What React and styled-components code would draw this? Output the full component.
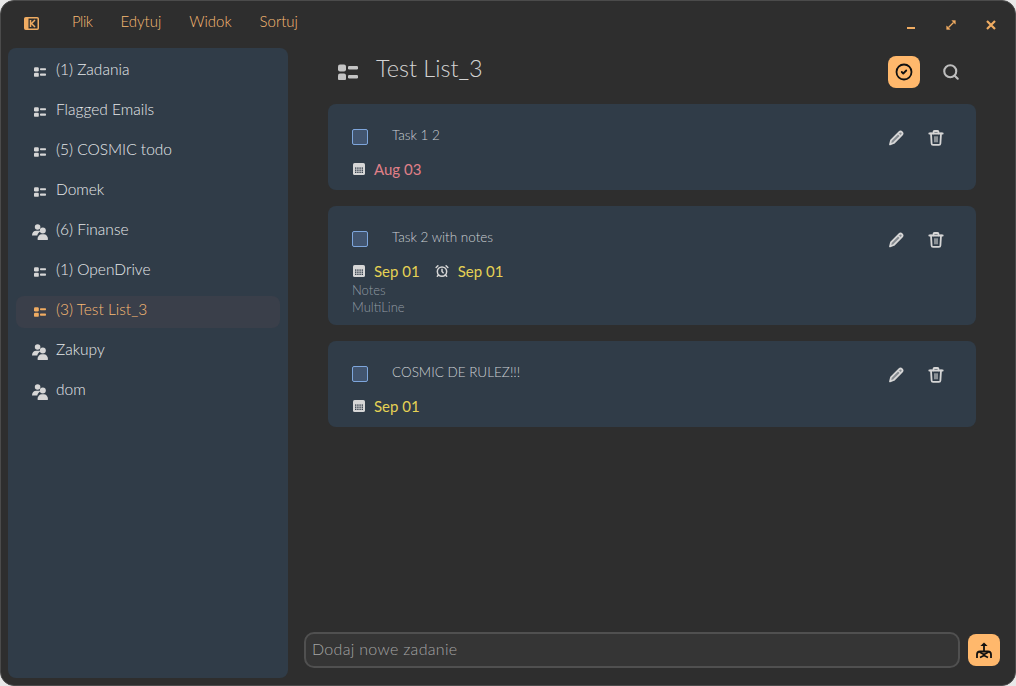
import React from 'react'
import styled, { createGlobalStyle } from 'styled-components'
import { AlarmClock, CircleCheck, Search } from 'lucide-react'

const GlobalStyle = createGlobalStyle`
    html, body {
        margin: 0;
        padding: 0;
        background: #e8e8e8;
    }
    * {
        box-sizing: border-box;
    }
`

const ListIcon = ({ size = 12, color = '#d6d6d6' }) => (
    <svg width={size} height={size * 0.84} viewBox="0 0 20 16" fill={color}>
        <rect x="0" y="0" width="8" height="7" rx="2" />
        <rect x="0" y="9" width="8" height="7" rx="2" />
        <rect x="10" y="1.500" width="10" height="3.600" rx="1.200" />
        <rect x="10" y="10.500" width="10" height="3.600" rx="1.200" />
    </svg>
)

const PeopleIcon = () => (
    <svg width="16" height="16" viewBox="0 0 16 16" fill="#d6d6d6">
        <circle cx="5.600" cy="3" r="2.800" />
        <path d="M0 11.500C0 8.600 1.800 6.800 4.200 6.800h2.400c.6 0 1.200.1 1.700.4C6.600 8.300 5.600 9.700 5.300 11.500z" />
        <circle cx="10.800" cy="6.400" r="3" />
        <path d="M6.200 16c-.4 0-.7-.3-.7-.7 0-3 1.900-5 4.300-5h2c2.400 0 4.200 2 4.200 5 0 .4-.3.7-.7.7z" />
    </svg>
)

const CalendarIcon = () => (
    <svg width="12" height="12" viewBox="0 0 12 12">
        <rect width="12" height="12" rx="1.600" fill="#d6d6d6" />
        <g fill="#39434f">
            {[2, 4.200, 6.400, 8.600].map((x) =>
                [4.400, 6.500, 8.600].map((y) => <rect key={`${x}-${y}`} x={x} y={y} width="1.400" height="1.400" />)
            )}
        </g>
    </svg>
)

const PencilIcon = () => (
    <svg width="16" height="16" viewBox="0 0 16 16" fill="none" stroke="#d6d6d6" strokeLinejoin="round">
        <path d="M11.200 2.100a1.900 1.900 0 0 1 2.700 2.700L5.800 13 2 14.400l1-4z" fill="#d6d6d6" fillOpacity="0.5" strokeWidth="1.800" />
        <path d="M10 3.400l2.600 2.600" strokeWidth="1.400" />
    </svg>
)

const TrashIcon = () => (
    <svg width="16" height="16" viewBox="0 0 16 16" fill="none" stroke="#d6d6d6" strokeWidth="1.800" strokeLinecap="round" strokeLinejoin="round">
        <path d="M1.300 3.500h13.400" />
        <path d="M5.500 3.300V2a1 1 0 0 1 1-1h3a1 1 0 0 1 1 1v1.300" />
        <path d="M3 3.500l.6 10a1.500 1.500 0 0 0 1.500 1.400h5.800a1.500 1.500 0 0 0 1.500-1.400l.6-10" />
        <rect x="6" y="6.300" width="4" height="6" fill="#d6d6d6" fillOpacity="0.55" stroke="none" />
    </svg>
)

const LogoIcon = () => (
    <svg width="15" height="13" viewBox="0 0 15 13" fill="none" stroke="#f0ac62">
        <rect x="0.750" y="0.750" width="13.500" height="11.500" rx="1" strokeWidth="1.500" />
        <rect x="1" y="1" width="3.500" height="11" fill="#f0ac62" stroke="none" />
        <path d="M6.500 3v7M11 3L7.500 6.500 11 10" strokeWidth="1.500" />
    </svg>
)

const MinimizeIcon = () => (
    <svg width="10" height="10" viewBox="0 0 10 10" stroke="#f0ac62" strokeWidth="2">
        <path d="M1 8h8" />
    </svg>
)

const MaximizeIcon = () => (
    <svg width="10" height="10" viewBox="0 0 10 10" fill="#f0ac62" stroke="#f0ac62">
        <path d="M2.500 7.500l5-5" strokeWidth="1.300" />
        <path d="M5.800 .6h3.600v3.600zM.6 5.800v3.600h3.600z" strokeWidth="0.400" />
    </svg>
)

const CloseIcon = () => (
    <svg width="10" height="10" viewBox="0 0 10 10" stroke="#f0ac62" strokeWidth="2.200">
        <path d="M1 1l8 8M9 1L1 9" />
    </svg>
)

const SendIcon = () => (
    <svg width="18" height="18" viewBox="0 0 18 18" fill="none" stroke="#111" strokeWidth="1.800">
        <path d="M9 10V3" />
        <path d="M5.400 5L9 1.400 12.600 5z" fill="#111" stroke="none" />
        <path d="M2 17v-3.500C2 11.500 3 10.500 5 10.500h8c2 0 3 1 3 3V17" />
        <path d="M4.500 11L9 13.500l4.500-2.500" />
        <path d="M5 16.500L9 14.500l4 2" />
    </svg>
)

const Window = styled.div`
    width: 1016px;
    height: 686px;
    display: flex;
    flex-direction: column;
    overflow: hidden;
    background: #2e2e2e;
    border: 1px solid #4b4b4b;
    border-radius: 14px;
    font-family: Lato, "Liberation Sans", sans-serif;
    font-weight: 300;
`

const TitleBar = styled.div`
    height: 47px;
    flex: none;
    display: flex;
    align-items: flex-start;
    padding: 10px 19px 0 23px;
`

const LogoSlot = styled.div`
    width: 48px;
    height: 24px;
    display: flex;
    align-items: center;
`

const Menu = styled.nav`
    display: flex;
    gap: 28px;
`

const MenuItem = styled.span`
    font-size: 15px;
    line-height: 20px;
    color: #f8ba74;
    letter-spacing: ${({ $narrow }) => ($narrow ? '-0.5px' : '0')};
`

const WindowControls = styled.div`
    margin-left: auto;
    display: flex;
    align-items: center;
    height: 28px;
    gap: 30px;
`

const Body = styled.div`
    flex: 1;
    min-height: 0;
    display: flex;
    padding: 0 15px 7px 7px;
`

const Sidebar = styled.aside`
    width: 280px;
    flex: none;
    display: flex;
    flex-direction: column;
    gap: 8px;
    padding: 8px;
    border-radius: 8px;
    background: #303c48;
`

const SideItem = styled.div`
    height: 32px;
    display: flex;
    align-items: center;
    gap: 8px;
    padding: 0 0 6px 16px;
    border-radius: 8px;
    font-size: 15.500px;
    color: ${({ $active }) => ($active ? '#f8ba74' : '#e6e8ea')};
    background: ${({ $active }) => ($active ? '#3a3f4a' : 'transparent')};
`

const SideIcon = styled.span`
    width: 16px;
    height: 16px;
    flex: none;
    margin-top: 6px;
    display: flex;
    align-items: center;
    justify-content: center;
`

const Main = styled.main`
    flex: 1;
    min-width: 0;
    display: flex;
    flex-direction: column;
    padding-left: 16px;
`

const Content = styled.div`
    flex: 1;
    min-height: 0;
    padding: 8px 24px 0 24px;
`

const TitleRow = styled.div`
    height: 32px;
    display: flex;
    align-items: center;
    gap: 18px;
    margin-bottom: 16px;
    padding: 0 9px 0 10px;
`

const Title = styled.h1`
    margin: 0 0 8px;
    font-size: 23.500px;
    font-weight: 300;
    line-height: 28px;
    color: #d4d4d4;
`

const TitleActions = styled.div`
    margin-left: auto;
    display: flex;
    align-items: center;
    gap: 15px;
`

const ActionButton = styled.button`
    width: 32px;
    height: 32px;
    padding: 0;
    border: 0;
    border-radius: 8px;
    display: flex;
    align-items: center;
    justify-content: center;
    background: ${({ $on }) => ($on ? '#ffb86c' : 'transparent')};
`

const Cards = styled.div`
    display: flex;
    flex-direction: column;
    gap: 16px;
`

const Card = styled.article`
    display: flex;
    flex-direction: column;
    padding: 16px 24px 0;
    height: ${({ $h }) => $h}px;
    border-radius: 8px;
    background: #303c48;
`

const TaskRow = styled.div`
    height: 32px;
    display: flex;
    align-items: center;
    margin-bottom: 7px;
`

const Check = styled.span`
    width: 16px;
    height: 16px;
    flex: none;
    margin: 2px 24px 0 0;
    border: 1px solid #7ea6dc;
    border-radius: 2px;
    background: #42556f;
`

const TaskName = styled.span`
    margin-top: -3px;
    font-size: 13.500px;
    color: #ccd0d4;
`

const TaskActions = styled.div`
    margin: 4px 0 0 auto;
    display: flex;
    gap: 8px;
`

const IconButton = styled.span`
    width: 32px;
    height: 32px;
    display: flex;
    align-items: center;
    justify-content: center;
`

const DateRow = styled.div`
    display: flex;
    align-items: center;
    height: 20px;
    padding-left: 1px;
`

const DateText = styled.span`
    margin: 0 15px 0 9px;
    font-size: 15px;
    font-weight: 400;
    color: ${({ $overdue }) => ($overdue ? '#e08088' : '#e6d254')};
`

const Notes = styled.div`
    margin-top: 1px;
    font-size: 13px;
    line-height: 16.500px;
    color: #929ba3;
`

const InputRow = styled.div`
    display: flex;
    align-items: center;
    gap: 8px;
    padding-bottom: 10px;
`

const TaskInput = styled.input`
    flex: 1;
    min-width: 0;
    height: 36px;
    padding: 0 6px 4px;
    border: 2px solid #505050;
    border-radius: 10px;
    outline: none;
    background: #353535;
    font-family: inherit;
    font-weight: 300;
    font-size: 16px;
    letter-spacing: 0.300px;
    color: #ddd;

    &::placeholder {
        color: #a4a4a4;
        opacity: 1;
    }
`

const lists = [
    { name: '(1) Zadania' },
    { name: 'Flagged Emails' },
    { name: '(5) COSMIC todo' },
    { name: 'Domek' },
    { name: '(6) Finanse', shared: true },
    { name: '(1) OpenDrive' },
    { name: '(3) Test List_3', active: true },
    { name: 'Zakupy', shared: true },
    { name: 'dom', shared: true },
]

function Task({ name, height, date, overdue, alarm, notes }) {
    return (
        <Card $h={height}>
            <TaskRow>
                <Check />
                <TaskName>{name}</TaskName>
                <TaskActions>
                    <IconButton><PencilIcon /></IconButton>
                    <IconButton><TrashIcon /></IconButton>
                </TaskActions>
            </TaskRow>
            <DateRow>
                <CalendarIcon />
                <DateText $overdue={overdue}>{date}</DateText>
                {alarm && <AlarmClock size={14} color="#d6d6d6" strokeWidth={2.6} />}
                {alarm && <DateText>{alarm}</DateText>}
            </DateRow>
            {notes && <Notes>{notes.map((line) => <div key={line}>{line}</div>)}</Notes>}
        </Card>
    )
}

export default function App() {
    return (
        <>
            <GlobalStyle />
            <Window>
                <TitleBar>
                    <LogoSlot><LogoIcon /></LogoSlot>
                    <Menu>
                        <MenuItem $narrow>Plik</MenuItem>
                        <MenuItem>Edytuj</MenuItem>
                        <MenuItem>Widok</MenuItem>
                        <MenuItem>Sortuj</MenuItem>
                    </Menu>
                    <WindowControls>
                        <MinimizeIcon />
                        <MaximizeIcon />
                        <CloseIcon />
                    </WindowControls>
                </TitleBar>
                <Body>
                    <Sidebar>
                        {lists.map((list) => (
                            <SideItem key={list.name} $active={list.active}>
                                <SideIcon>
                                    {list.shared ? <PeopleIcon /> : <ListIcon size={12} color={list.active ? '#f0ac62' : '#d6d6d6'} />}
                                </SideIcon>
                                {list.name}
                            </SideItem>
                        ))}
                    </Sidebar>
                    <Main>
                        <Content>
                            <TitleRow>
                                <ListIcon size={20} color="#c4c4c4" />
                                <Title>Test List_3</Title>
                                <TitleActions>
                                    <ActionButton $on><CircleCheck size={18} color="#111" strokeWidth={2.4} /></ActionButton>
                                    <ActionButton><Search size={18} color="#bdbdbd" strokeWidth={2.8} /></ActionButton>
                                </TitleActions>
                            </TitleRow>
                            <Cards>
                                <Task name="Task 1 2" height={86} date="Aug 03" overdue />
                                <Task name="Task 2 with notes" height={119} date="Sep 01" alarm="Sep 01" notes={['Notes', 'MultiLine']} />
                                <Task name="COSMIC DE RULEZ!!!" height={86} date="Sep 01" />
                            </Cards>
                        </Content>
                        <InputRow>
                            <TaskInput placeholder="Dodaj nowe zadanie" />
                            <ActionButton $on><SendIcon /></ActionButton>
                        </InputRow>
                    </Main>
                </Body>
            </Window>
        </>
    )
}
